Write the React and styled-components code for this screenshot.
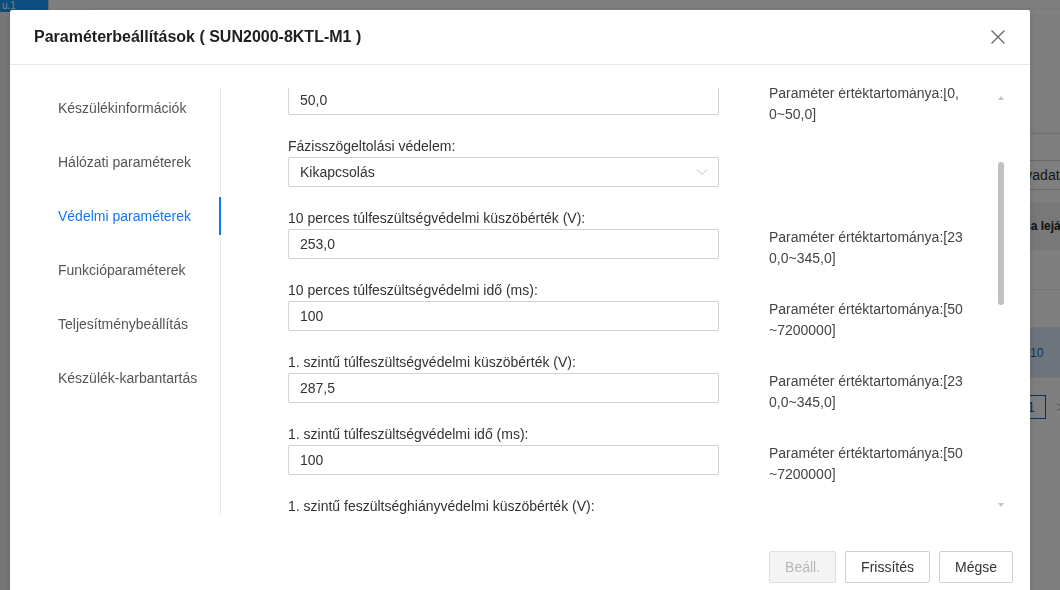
import React, { useLayoutEffect, useRef } from 'react';
import styled, { createGlobalStyle } from 'styled-components';

const Global = createGlobalStyle`
  html, body { margin: 0; padding: 0; width: 1060px; height: 590px; overflow: hidden; }
  body { font-family: "Liberation Sans", Arial, sans-serif; background: #fff; }
  * { box-sizing: border-box; }
`;

/* ---------- background page ---------- */
const Page = styled.div`
  display: flex;
  width: 1060px;
  height: 590px;
  background: #fff;
`;
const SideNav = styled.div`
  width: 56px;
  background: #eeeeee;
  border-right: 1px solid #d6d6d6;
  display: flex;
  flex-direction: column;
`;
const NavTab = styled.div`
  width: 48px;
  height: 12px;
  overflow: hidden;
  background: #1c9afc;
  color: #fff;
  font-size: 10px;
  line-height: 12px;
  padding-left: 2px;
`;
const Main = styled.div`
  flex: 1;
  display: flex;
  flex-direction: column;
`;
const TopBar = styled.div`
  height: 9px;
  border-bottom: 1px solid #f4f4f4;
  margin-left: 40px;
`;
const Section = styled.div`
  margin-top: 124px;
  border-top: 1px solid #dcdcdc;
  display: flex;
  flex-direction: column;
`;
const Toolbar = styled.div`
  display: flex;
  padding: 26px 0 0 953px;
`;
const BgButton = styled.div`
  height: 30px;
  padding: 0 6px;
  border: 1px solid #d0d0d0;
  font-size: 14px;
  line-height: 28px;
  color: #333;
  white-space: nowrap;
`;
const TableHead = styled.div`
  margin-top: 12px;
  height: 48px;
  background: #f0f0f0;
  display: flex;
  align-items: center;
  padding-left: 937px;
  font-size: 12px;
  font-weight: bold;
  color: #222;
  white-space: nowrap;
`;
const TableRow = styled.div`
  height: ${p => p.h || 40}px;
  display: flex;
  align-items: center;
  padding-left: 981px;
  font-size: 12px;
  color: #1263c8;
  background: ${p => (p.hl ? '#dce8f6' : '#fff')};
  border-bottom: 1px solid #ececec;
`;
const Pager = styled.div`
  margin-top: 17px;
  display: flex;
  align-items: center;
  gap: 10px;
  padding-left: 967px;
`;
const PageBox = styled.div`
  width: 30px;
  height: 24px;
  border: 1px solid #1263c8;
  color: #1263c8;
  font-size: 14px;
  line-height: 22px;
  text-align: right;
  padding-right: 10px;
`;
const PageArrow = styled.div`
  color: #bbb;
  font-size: 14px;
`;

/* ---------- overlay + modal ---------- */
const Overlay = styled.div`
  position: fixed;
  inset: 0;
  background: rgba(0, 0, 0, 0.5);
`;
const Modal = styled.div`
  position: absolute;
  top: 10px;
  left: 10px;
  width: 1020px;
  height: 600px;
  background: #fff;
  border-radius: 2px;
  box-shadow: 0 2px 8px rgba(0, 0, 0, 0.15);
  display: flex;
  flex-direction: column;
`;
const Header = styled.div`
  height: 55px;
  border-bottom: 1px solid #e8e8e8;
  display: flex;
  align-items: center;
  justify-content: space-between;
  padding: 0 20px 0 24px;
`;
const Title = styled.div`
  font-size: 16px;
  font-weight: bold;
  color: #1f1f1f;
`;
const CloseBtn = styled.button`
  width: 24px;
  height: 24px;
  border: 0;
  background: none;
  padding: 0;
  display: flex;
  align-items: center;
  justify-content: center;
  cursor: pointer;
`;
const Body = styled.div`
  display: flex;
  padding-top: 23px;
  height: 449px;
`;
const Sidebar = styled.div`
  width: 211px;
  border-right: 1px solid #e8e8e8;
  display: flex;
  flex-direction: column;
  gap: 16px;
  padding-top: 1px;
`;
const NavItem = styled.div`
  height: 38px;
  display: flex;
  align-items: center;
  padding-left: 48px;
  font-size: 14px;
  color: ${p => (p.active ? '#1677f2' : '#555')};
  border-right: 2px solid ${p => (p.active ? '#1677f2' : 'transparent')};
  margin-right: -1px;
  white-space: nowrap;
`;
const Content = styled.div`
  flex: 1;
  display: flex;
`;
const Scroller = styled.div`
  flex: 1;
  overflow-y: auto;
  scrollbar-width: none;
  &::-webkit-scrollbar { display: none; }
  padding-left: 67px;
`;
const Group = styled.div`
  display: flex;
  align-items: flex-start;
  height: 72px;
`;
const Field = styled.div`
  width: 431px;
  display: flex;
  flex-direction: column;
  gap: 1px;
`;
const Label = styled.div`
  font-size: 14px;
  line-height: 20px;
  color: #333;
  white-space: nowrap;
`;
const Input = styled.div`
  height: 30px;
  border: 1px solid #d4d4d4;
  border-radius: 2px;
  display: flex;
  align-items: center;
  justify-content: space-between;
  padding: 0 10px 0 11px;
  font-size: 14px;
  color: #333;
`;
const Range = styled.div`
  margin-left: 50px;
  width: 198px;
  padding-top: 19px;
  font-size: 14px;
  line-height: 21px;
  color: #444;
`;
const RangeLine = styled.div`
  white-space: nowrap;
`;
const Track = styled.div`
  width: 6px;
  margin: 0 26px 0 31px;
  display: flex;
  flex-direction: column;
  align-items: center;
  padding-top: 8px;
  padding-bottom: 7px;
`;
const Arrow = styled.div`
  width: 0;
  height: 0;
  border-left: 3px solid transparent;
  border-right: 3px solid transparent;
  ${p => (p.up ? 'border-bottom: 4px solid #c4c4c4;' : 'border-top: 4px solid #c4c4c4;')}
`;
const Thumb = styled.div`
  width: 6px;
  height: 143px;
  margin-top: 62px;
  border-radius: 3px;
  background: #c1c1c1;
`;
const TrackFill = styled.div`
  flex: 1;
`;
const Footer = styled.div`
  display: flex;
  justify-content: flex-end;
  gap: 9px;
  padding: 37px 17px 0 0;
`;
const Btn = styled.button`
  height: 32px;
  padding: 0 15px;
  font-family: inherit;
  font-size: 14px;
  border-radius: 2px;
  border: 1px solid ${p => (p.disabled ? '#dedede' : '#cfcfcf')};
  background: ${p => (p.disabled ? '#f4f4f4' : '#fff')};
  color: ${p => (p.disabled ? '#b8b8b8' : '#333')};
  cursor: ${p => (p.disabled ? 'not-allowed' : 'pointer')};
`;

const navItems = [
  'Készülékinformációk',
  'Hálózati paraméterek',
  'Védelmi paraméterek',
  'Funkcióparaméterek',
  'Teljesítménybeállítás',
  'Készülék-karbantartás',
];

const fields = [
  { label: 'Feszültségkiegyensúlyozatlansági védelem küszöbértéke (%):', value: '50,0', range: ['Paraméter értéktartománya:[0,', '0~50,0]'] },
  { label: 'Fázisszögeltolási védelem:', value: 'Kikapcsolás', select: true },
  { label: '10 perces túlfeszültségvédelmi küszöbérték (V):', value: '253,0', range: ['Paraméter értéktartománya:[23', '0,0~345,0]'] },
  { label: '10 perces túlfeszültségvédelmi idő (ms):', value: '100', range: ['Paraméter értéktartománya:[50', '~7200000]'] },
  { label: '1. szintű túlfeszültségvédelmi küszöbérték (V):', value: '287,5', range: ['Paraméter értéktartománya:[23', '0,0~345,0]'] },
  { label: '1. szintű túlfeszültségvédelmi idő (ms):', value: '100', range: ['Paraméter értéktartománya:[50', '~7200000]'] },
  { label: '1. szintű feszültséghiányvédelmi küszöbérték (V):', value: '184,0', range: ['Paraméter értéktartománya:[46', ',0~230,0]'] },
];

const Chevron = () => (
  <svg width="12" height="8" viewBox="0 0 12 8">
    <path d="M1 1.5 L6 6.5 L11 1.5" fill="none" stroke="#bdbdbd" strokeWidth="1" />
  </svg>
);

const CloseIcon = () => (
  <svg width="16" height="16" viewBox="0 0 16 16">
    <path d="M1.5 1.5 L14.5 14.5 M14.5 1.5 L1.5 14.5" stroke="#666" strokeWidth="1.3" />
  </svg>
);

export default function App() {
  const scRef = useRef(null);
  useLayoutEffect(() => {
    if (scRef.current) scRef.current.scrollTop = 24;
  }, []);
  return (
    <>
      <Global />
      <Page>
        <SideNav>
          <NavTab>u.1</NavTab>
        </SideNav>
        <Main>
          <TopBar />
          <Section>
            <Toolbar>
              <BgButton>Távadatok exportálása</BgButton>
            </Toolbar>
            <TableHead>Garancia lejárata</TableHead>
            <TableRow h={40} />
            <TableRow h={38} />
            <TableRow hl h={50}>10</TableRow>
            <Pager>
              <PageBox>1</PageBox>
              <PageArrow>&gt;</PageArrow>
            </Pager>
          </Section>
        </Main>
      </Page>
      <Overlay>
        <Modal>
          <Header>
            <Title>Paraméterbeállítások ( SUN2000-8KTL-M1 )</Title>
            <CloseBtn aria-label="close"><CloseIcon /></CloseBtn>
          </Header>
          <Body>
            <Sidebar>
              {navItems.map((n, i) => (
                <NavItem key={n} active={i === 2}>{n}</NavItem>
              ))}
            </Sidebar>
            <Content>
              <Scroller ref={scRef}>
                {fields.map((f, i) => (
                  <Group key={i}>
                    <Field>
                      <Label>{f.label}</Label>
                      <Input>
                        <span>{f.value}</span>
                        {f.select && <Chevron />}
                      </Input>
                    </Field>
                    {f.range && (
                      <Range>
                        {f.range.map((r, j) => <RangeLine key={j}>{r}</RangeLine>)}
                      </Range>
                    )}
                  </Group>
                ))}
              </Scroller>
              <Track>
                <Arrow up />
                <Thumb />
                <TrackFill />
                <Arrow />
              </Track>
            </Content>
          </Body>
          <Footer>
            <Btn disabled>Beáll.</Btn>
            <Btn>Frissítés</Btn>
            <Btn>Mégse</Btn>
          </Footer>
        </Modal>
      </Overlay>
    </>
  );
}
